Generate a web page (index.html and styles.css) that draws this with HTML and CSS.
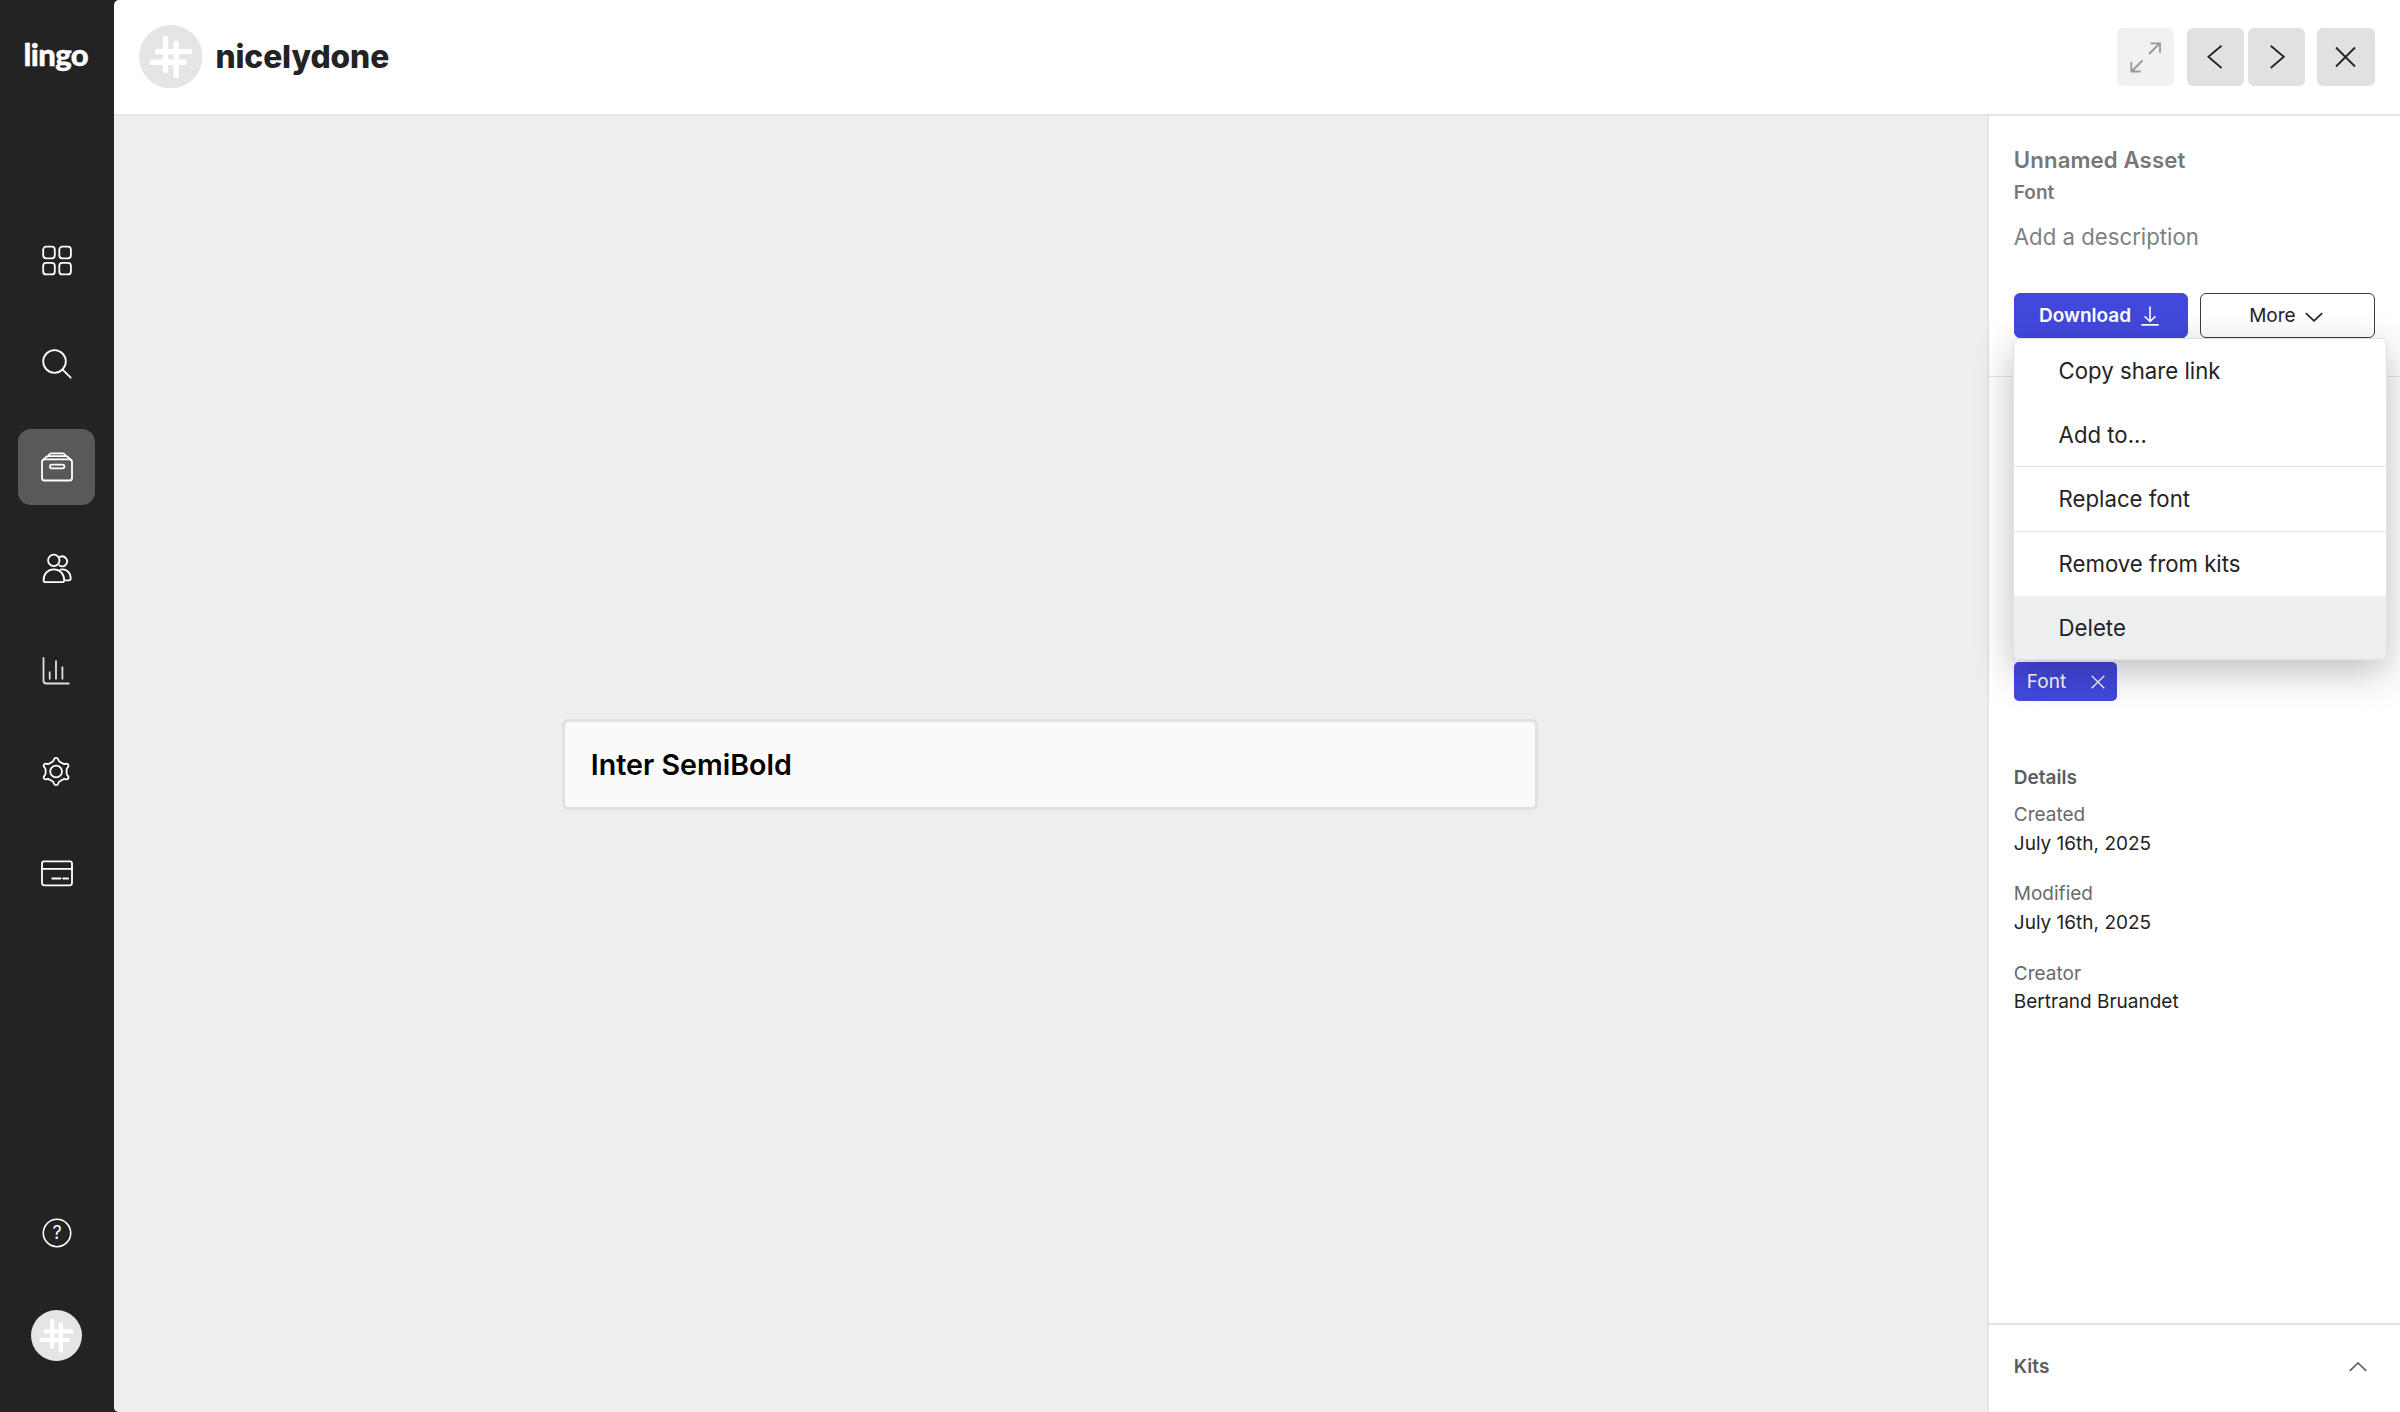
FILE: index.html
```html
<!DOCTYPE html>
<html lang="en">
<head>
<meta charset="utf-8">
<title>lingo</title>
<link rel="stylesheet" href="styles.css">
</head>
<body>
<svg class="defs" width="0" height="0" aria-hidden="true">
  <symbol id="hash" viewBox="0 0 63.5 63.5">
    <circle cx="31.75" cy="31.75" r="31.75" fill="#e5e5e5"/>
    <g fill="#fff">
      <rect x="23.8" y="11" width="5.3" height="36.8" rx="1.5"/>
      <rect x="34.5" y="16" width="5.3" height="37" rx="1.5"/>
      <rect x="16.2" y="24" width="36.8" height="5.3" rx="1.5"/>
      <rect x="10.8" y="34.6" width="36.8" height="5.3" rx="1.5"/>
    </g>
  </symbol>
</svg>
<div class="app">
  <nav class="sidebar">
    <div class="logo">lingo</div>
    <div class="nav">
      <a class="nav-item"><svg class="icon" viewBox="0 0 36 36"><rect x="4.2" y="1.7" width="11.6" height="11.6" rx="3"/><rect x="20.3" y="1.7" width="11.6" height="11.6" rx="3"/><rect x="4.2" y="17.8" width="11.6" height="11.6" rx="3"/><rect x="20.3" y="17.8" width="11.6" height="11.6" rx="3"/></svg></a>
      <a class="nav-item"><svg class="icon" viewBox="0 0 36 36"><circle cx="15.5" cy="14.5" r="11.3"/><path d="M23.6 22.6l8.1 8.1"/></svg></a>
      <a class="nav-item active"><svg class="icon" viewBox="0 0 36 36"><rect x="3" y="10.3" width="30" height="21.2" rx="2.6"/><path d="M4 11l3.3-3.2q.8-.7 1.8-.7h17.8q1 0 1.8.7L32 11M8.8 7.3l1.9-2.3q.6-.7 1.600-.7h11.400q1 0 1.600.7l1.900 2.300"/><rect x="11" y="15.7" width="14.4" height="3.7" rx="1.85"/></svg></a>
      <a class="nav-item"><svg class="icon" viewBox="0 0 36 36"><circle cx="14.8" cy="9.4" r="5.7"/><path d="M20.5 6.200a4.900 4.900 0 1 1 0 8.300M14.800 18.300c-6 0-10.200 4.700-10.200 10.900q0 1.900 1.900 1.900h16.800q1.900 0 1.900-1.900c0-6.200-4.400-10.900-10.400-10.900zM21.500 18.600c6.400-1 10.200 3.300 10.200 9q0 1.800-1.800 1.800h-4.600"/></svg></a>
      <a class="nav-item"><svg class="icon" viewBox="0 0 36 36"><path class="soft" d="M4.500 4.200v23.600q0 2.700 2.700 2.700h23.300M10.700 18.500v8M17 7.500v19M23.400 13.500v13"/></svg></a>
      <a class="nav-item"><svg class="icon" viewBox="0 0 36 36"><circle cx="17.1" cy="16.5" r="5.9"/><path d="M15 4.400Q15.400 2.800 17.100 2.800T19.200 4.400Q19.500 6.200 21.300 7.100L23.400 8.300Q25 9.400 26.600 8.800Q28.400 8.200 29.200 9.700T28.700 12.400Q27.600 13.400 27.600 15V18Q27.600 19.600 28.700 20.600Q30 21.800 29.200 23.300T26.600 24.200Q25 23.600 23.400 24.700L21.300 25.900Q19.500 26.800 19.200 28.600Q18.800 30.200 17.100 30.200T15 28.600Q14.700 26.800 12.900 25.900L10.800 24.700Q9.200 23.600 7.600 24.200Q5.800 24.800 5 23.300T5.500 20.600Q6.600 19.600 6.600 18V15Q6.600 13.400 5.500 12.400Q4.200 11.200 5 9.700T7.600 8.800Q9.200 9.400 10.800 8.300L12.900 7.100Q14.700 6.200 15 4.400Z"/></svg></a>
      <a class="nav-item"><svg class="icon" viewBox="0 0 36 36"><rect x="3" y="4.3" width="30" height="24" rx="2.2"/><path d="M3 11.900h30M13.200 21.500h8.300M24.200 21.500h5"/></svg></a>
    </div>
    <div class="nav-bottom">
      <svg class="help" viewBox="0 0 30 30"><circle cx="15" cy="15" r="13.7"/><text x="15" y="21.3" text-anchor="middle">?</text></svg>
      <svg class="me"><use href="#hash"/></svg>
    </div>
  </nav>
  <div class="content">
    <header class="header">
      <svg class="avatar"><use href="#hash"/></svg>
      <h1 class="space">nicelydone</h1>
      <div class="actions">
        <button class="square disabled"><svg viewBox="0 0 57 57"><path d="M32 25l11-11M33.500 14.300h9.500v9.500M25.500 31.500l-11 11M14.300 33v9.500h9.500"/></svg></button>
        <div class="pair">
          <button class="square"><svg viewBox="0 0 57 57"><path d="M34.500 16.800L21.400 27.800L34.500 39"/></svg></button>
          <button class="square"><svg viewBox="0 0 57 57"><path d="M22.700 16.800L35.800 27.800L22.700 39"/></svg></button>
        </div>
        <button class="square"><svg viewBox="0 0 57 57"><path d="M19 18.500l19 19M38 18.500l-19 19"/></svg></button>
      </div>
    </header>
    <div class="body">
      <main class="canvas"><div class="font-card">Inter SemiBold</div></main>
      <aside class="panel">
        <section class="summary">
          <h2 class="title">Unnamed Asset</h2>
          <div class="kind">Font</div>
          <div class="description">Add a description</div>
          <div class="buttons">
            <button class="btn primary">Download<svg viewBox="0 0 18 20"><path d="M9 .5v15M3.600 10.300L9 15.500l5.400-5.200M.3 18.900h17.400"/></svg></button>
            <div class="more">
              <button class="btn">More<svg viewBox="0 0 18 20"><path d="M.8 7.200L9 14.900l8.200-7.700"/></svg></button>
              <ul class="menu">
                <li>Copy share link</li>
                <li>Add to...</li>
                <li class="split">Replace font</li>
                <li class="split">Remove from kits</li>
                <li class="hover">Delete</li>
              </ul>
            </div>
          </div>
        </section>
        <section class="meta">
          <div class="tag">Font<svg viewBox="0 0 14 14"><path d="M.7 .7l12.600 12.600M13.300 .7L.7 13.300"/></svg></div>
          <h3 class="heading">Details</h3>
          <dl class="details">
            <div><dt>Created</dt><dd>July 16th, 2025</dd></div>
            <div><dt>Modified</dt><dd>July 16th, 2025</dd></div>
            <div><dt>Creator</dt><dd>Bertrand Bruandet</dd></div>
          </dl>
        </section>
        <footer class="kits"><h3 class="heading">Kits</h3><svg viewBox="0 0 18 10"><path d="M.8 8.900L9 1l8.200 7.900"/></svg></footer>
      </aside>
    </div>
  </div>
</div>
</body>
</html>
```
FILE: styles.css
```css
* { box-sizing: border-box; }
body { margin: 0; background: #232323; color: #232323; font-family: Inter, "Liberation Sans", sans-serif; font-size: 19px; line-height: 29px; }
h1, h2, h3, dl, dd, ul { margin: 0; padding: 0; }
button { font: inherit; color: inherit; padding: 0; }
svg { display: block; flex: none; fill: none; stroke: currentColor; stroke-width: 1.6; }
.defs { position: absolute; }
.app { display: flex; height: 1412px; }

.sidebar { flex: none; width: 114px; padding-right: 1px; display: flex; flex-direction: column; align-items: center; color: #fff; }
.logo { margin-top: 32px; height: 44px; line-height: 44px; width: 66px; font-family: Lato, sans-serif; font-weight: 900; font-size: 31px; letter-spacing: -.600px; -webkit-text-stroke: .4px #fff; }
.nav { margin-top: 148.500px; display: flex; flex-direction: column; gap: 25.500px; }
.nav-item { width: 76.500px; height: 76.500px; display: flex; align-items: center; justify-content: center; border-radius: 13px; }
.nav-item.active { background: #58595a; }
.icon { width: 36px; height: 36px; stroke-width: 1.8; stroke-linejoin: round; stroke-linecap: round; }
.soft { stroke: #e0e0e0; stroke-linecap: butt; stroke-width: 1.8; }
.nav-bottom { margin-top: auto; margin-bottom: 51px; display: flex; flex-direction: column; align-items: center; gap: 62px; }
.help { width: 30px; height: 30px; stroke-width: 1.6; }
.help text { font-size: 18px; fill: #fff; stroke: none; }
.me { width: 51px; height: 51px; stroke: none; }

.content { flex: 1; min-width: 0; display: flex; flex-direction: column; background: #fff; border-radius: 5px 0 0 5px; overflow: hidden; }
.header { flex: none; height: 116px; border-bottom: 2px solid #e3e4e5; display: flex; align-items: center; padding: 0 25.400px; }
.avatar { width: 63.500px; height: 63.500px; stroke: none; }
.space { margin-left: 12.500px; font-size: 31.750px; line-height: 40px; font-weight: 800; letter-spacing: -.100px; }
.actions { margin-left: auto; display: flex; gap: 12.700px; }
.pair { display: flex; gap: 3.200px; }
.square { width: 57.200px; height: 57.200px; border: 0; border-radius: 6px; background: #e0e1e3; }
.square svg { width: 57px; height: 57px; stroke-width: 1.8; }
.square.disabled { background: #f0f1f1; color: #999; }

.body { flex: 1; min-height: 0; display: flex; }
.canvas { flex: 1; display: flex; align-items: center; justify-content: center; background: #edeef0; }
.font-card { width: 976px; height: 91px; border: 3px solid #e0e1e3; border-radius: 6px; background: #fafafa; padding: 0 25.400px; line-height: 85px; font-size: 28.600px; font-weight: 600; color: #000; }

.panel { flex: none; width: 413.200px; border-left: 2px solid #e3e4e5; display: flex; flex-direction: column; }
.summary { height: 261px; border-bottom: 1.600px solid #e3e4e5; padding: 28px 25.400px 0 25px; }
.title { font-size: 22.200px; line-height: 32px; font-weight: 600; letter-spacing: .120px; color: #777; }
.kind { margin-top: 1.500px; line-height: 29px; font-weight: 600; color: #777; }
.description { margin-top: 13px; font-size: 22.200px; line-height: 34px; color: #7f7f7f; }
.buttons { margin-top: 39.500px; display: grid; grid-template-columns: 1fr 1fr; gap: 12px; }
.btn { width: 100%; height: 45px; display: flex; align-items: center; justify-content: center; gap: 9px; padding-right: 3px; border: 1.600px solid #3c3c3c; border-radius: 6px; background: #fff; }
.btn svg { width: 18px; height: 20px; }
.primary { gap: 10px; padding-right: 4px; background: #4248dc; border-color: #4248dc; color: #fff; font-weight: 600; }
.more { position: relative; }
.menu { position: absolute; z-index: 2; top: 45px; right: -12px; width: 374px; list-style: none; background: #fff; border: 1px solid #e0e1e3; border-radius: 6px; overflow: hidden; box-shadow: 0 12px 38px rgba(0,0,0,.26); }
.menu li { height: 63.500px; line-height: 64px; padding-left: 45px; font-size: 22.200px; }
.menu .split { height: 64.800px; border-top: 1.500px solid #e0e1e3; }
.menu .hover { background: #edeef0; }

.meta { flex: 1; padding: 285px 25px 0; }
.tag { width: 103px; height: 39px; display: flex; align-items: center; justify-content: space-between; padding: 0 12px 0 13px; border-radius: 5px; background: #4248dc; color: #fff; }
.tag svg { width: 14px; height: 14px; stroke-width: 1.300; }
.heading { font-size: 19px; line-height: 29px; font-weight: 600; color: #5c5d5e; }
.meta .heading { margin: 61.500px 0 9.500px; }
.details { display: grid; gap: 22.200px; }
dt { line-height: 28.600px; color: #6a6a6a; }
dd { line-height: 28.600px; }
.kits { height: 89px; border-top: 2px solid #e3e4e5; padding: 0 33px 4px 25px; display: flex; align-items: center; justify-content: space-between; color: #5c5d5e; }
.kits svg { width: 18px; height: 10px; }
```
